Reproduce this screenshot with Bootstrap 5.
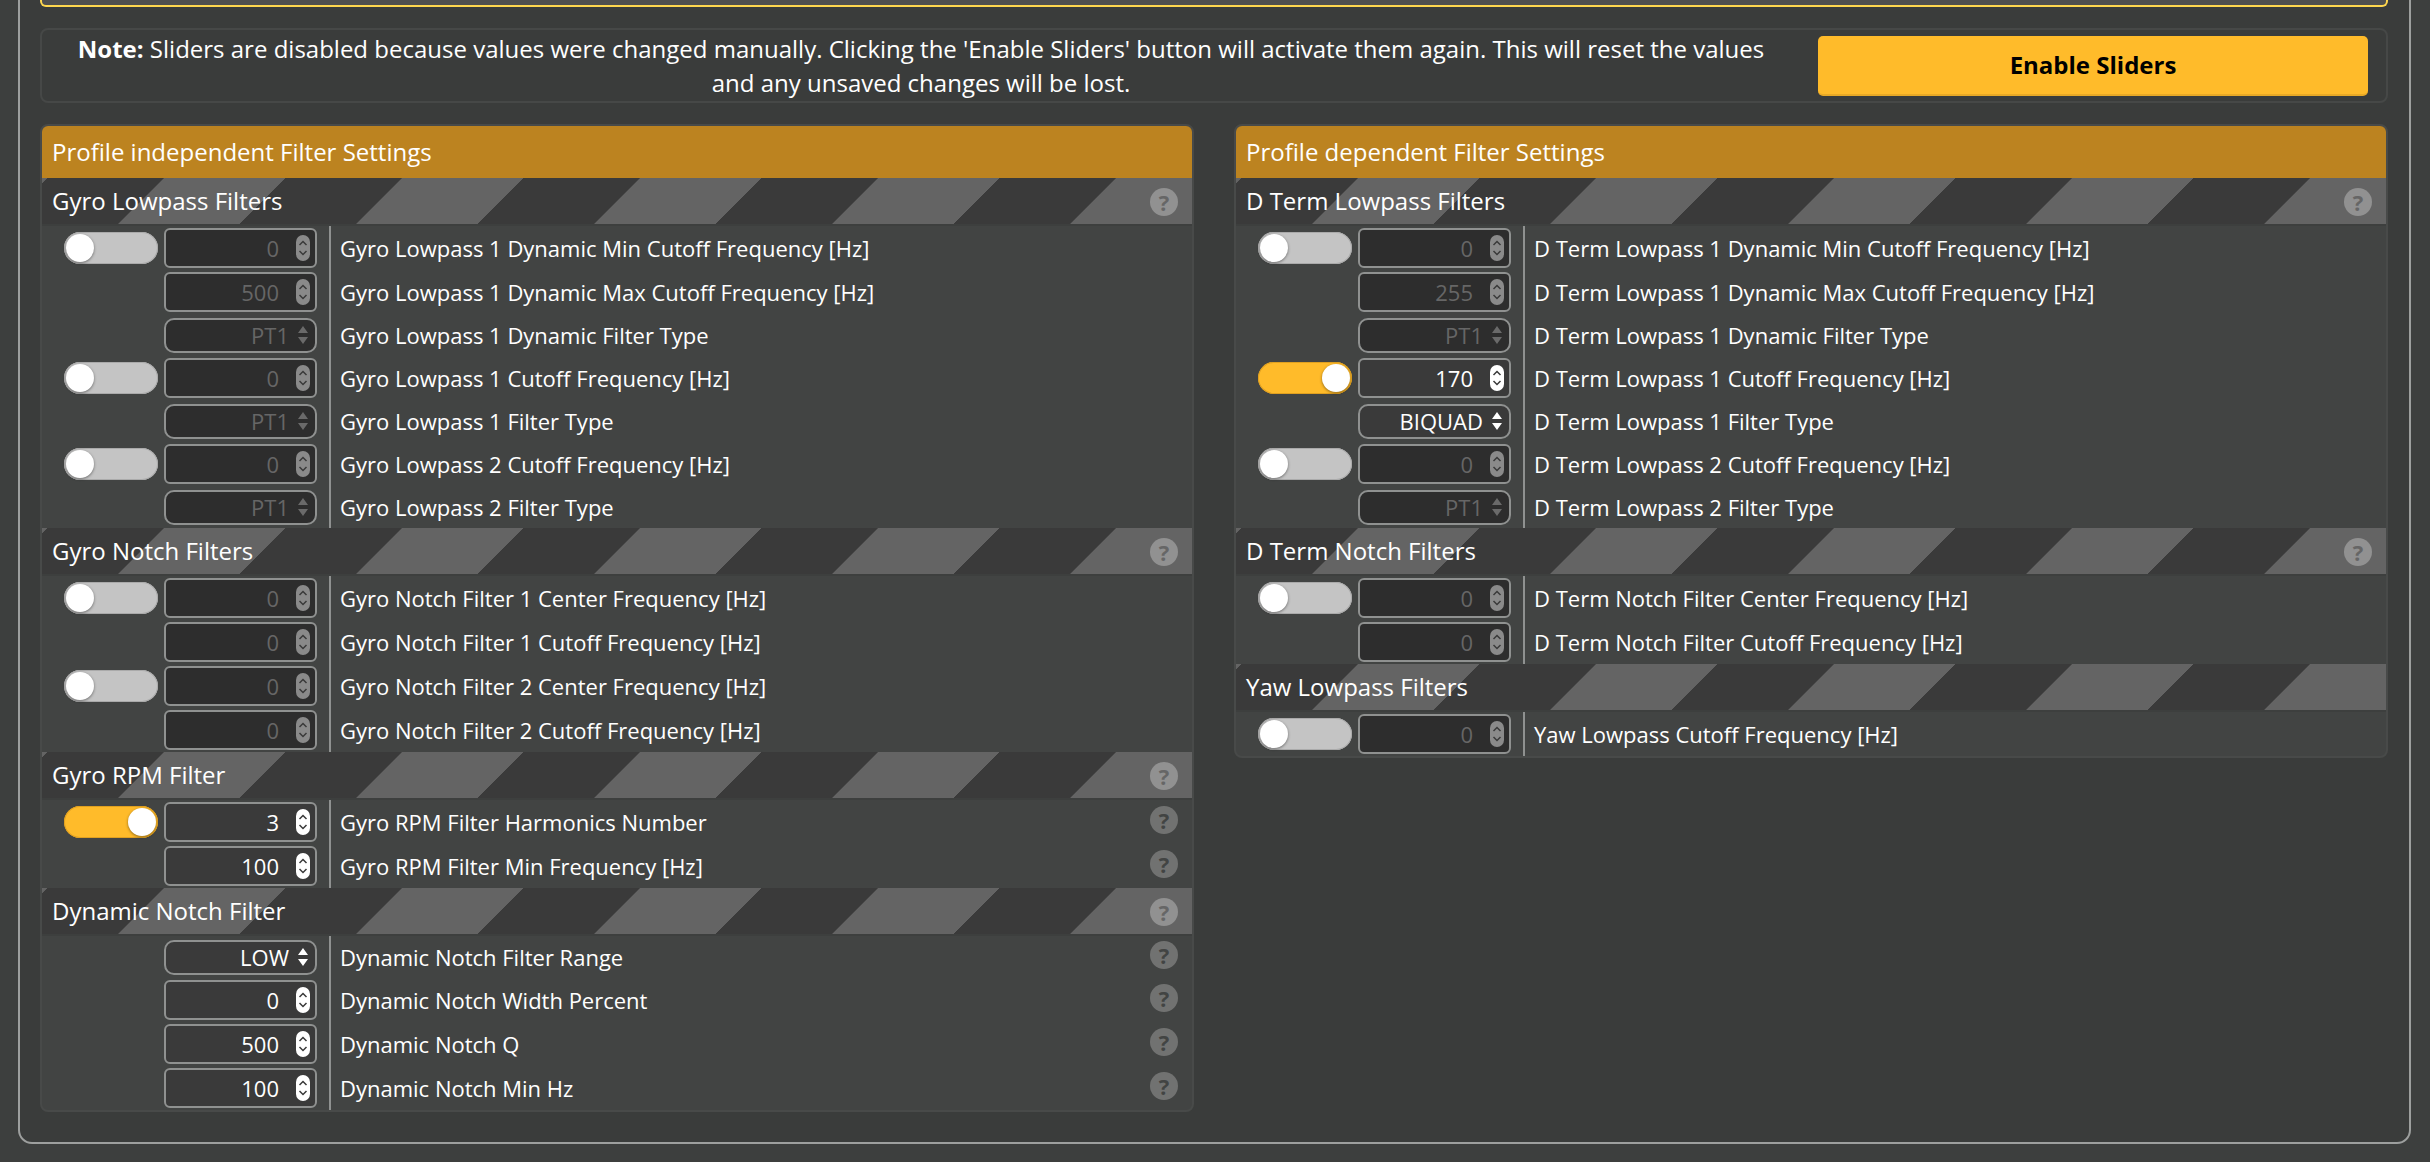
<!DOCTYPE html>
<html lang="en"><head><meta charset="utf-8"><title>Filter Settings</title>
<link href="https://cdn.jsdelivr.net/npm/bootstrap@5.3.0/dist/css/bootstrap.min.css" rel="stylesheet">
<style>
html,body{height:1162px;overflow:hidden;background:#3d3f3e;font-family:"Open Sans",sans-serif;font-size:22px;color:#fff}
.frame{margin:-20px 19px 0 18px;height:1164px;border:2px solid #9d9f9e;border-radius:14px;background:#3a3c3b;padding:0 21px 0 20px}
.warnbox{height:25px;background:#4f4f4f;border:2px solid #ffd74f;border-top:0;border-radius:0 0 6px 6px}
.notebox{margin-top:21px;height:75px;border:2px solid #464847;border-radius:8px;padding:0 18px 0 10px;font-size:24px}
.notetext{line-height:34px;padding:0 38px 0 10px}
.enable{flex:0 0 550px;height:60px;background:#ffbb2a;border:0;border-bottom:2px solid #e8a926;border-radius:5px;color:#000;font-weight:700;font-size:24px}
.cols{margin-top:21px;gap:40px}
.fpanel{flex:1 1 0;border:2px solid #484a49;border-radius:8px;background:#424443;overflow:hidden}
.fpanel:first-child{flex:0 0 1154px}
.ptitle{height:52px;background:#bc8320;padding-left:10px;font-size:24px}
.psub{height:48px;padding:0 14px 0 10px;border-bottom:2px solid #3d3f3e;font-size:24px;background:repeating-linear-gradient(135deg,#646464 0,#646464 3.5px,#3a3a3a 4px,#3a3a3a 86px,#646464 86.6px,#646464 168.3px)}
.frow{height:44px}
.frow.sel{height:42px}
.tslot{flex:0 0 122px;padding-right:6px;justify-content:flex-end}
.tgl{width:94px;height:32px;border-radius:16px;background:#c4c4c4;padding:2px;box-shadow:inset 0 0 0 1px #aaa}
.tgl i{display:block;width:28px;height:28px;border-radius:50%;background:#fff;box-shadow:0 1px 3px rgba(0,0,0,.45)}
.tgl.on{background:#ffbb2a;justify-content:flex-end;box-shadow:inset 0 0 0 1px #e0a020}
.vbox{flex:0 0 153px;height:40px;border:2px solid #8f9190;border-radius:6px;background:#3a3a3a;padding:0 5px 0 0;justify-content:flex-end}
.sel .vbox{height:35px;border-radius:10px}
.vbox.off{background:#2d2d2d;color:#666;border-color:#8f9190}
.vnum{margin-right:17px}
.vsel{margin-right:8px;font-size:22px}
.spin{width:14px;height:26px;flex:none;color:#fff}
.off .spin{color:#8a8a8a}
.arr{width:12px;height:20px;flex:none;margin-right:1px;color:#fff}
.off .arr{color:#6a6a6a}
.flabel{margin-left:12px;flex:1 1 0;height:100%;border-left:2px solid #8f9190;padding:0 14px 0 9px}
.qmark{width:28px;height:28px;border-radius:50%;background:#717271;color:#424443;font-weight:700;font-size:22px;line-height:28px;text-align:center;flex:none}
.flabel .qmark{margin-bottom:4px}
.psub .qmark{background:#919191;color:#666;margin-top:2px}
</style></head>
<body>
<svg width="0" height="0" class="position-absolute"><defs>
<symbol id="sp" viewBox="0 0 14 26"><rect width="14" height="26" rx="7" fill="currentColor"/><path d="M3.5 10 7 6.5 10.5 10M3.5 16 7 19.5 10.5 16" fill="none" stroke="#3a3a3a" stroke-width="1.5"/></symbol>
<symbol id="ar" viewBox="0 0 12 20"><path d="M6 1 11 8H1ZM6 19 1 12H11Z" fill="currentColor"/></symbol>
</defs></svg>
<div class="frame">
<div class="warnbox"></div>
<div class="notebox d-flex align-items-center">
<div class="notetext flex-fill text-center"><strong>Note:</strong> Sliders are disabled because values were changed manually. Clicking the 'Enable Sliders' button will activate them again. This will reset the values and any unsaved changes will be lost.</div>
<button class="btn enable" type="button">Enable Sliders</button>
</div>
<div class="cols d-flex align-items-start">

<div class="fpanel">
<div class="ptitle d-flex align-items-center">Profile independent Filter Settings</div>
<div class="psub d-flex align-items-center justify-content-between">Gyro Lowpass Filters<span class="qmark">?</span></div>
<div class="frow d-flex align-items-center"><div class="tslot d-flex"><span class="tgl d-flex"><i></i></span></div><div class="vbox off d-flex align-items-center"><span class="vnum">0</span><svg class="spin"><use href="#sp"/></svg></div><div class="flabel d-flex align-items-center">Gyro Lowpass 1 Dynamic Min Cutoff Frequency [Hz]</div></div>
<div class="frow d-flex align-items-center"><div class="tslot d-flex"></div><div class="vbox off d-flex align-items-center"><span class="vnum">500</span><svg class="spin"><use href="#sp"/></svg></div><div class="flabel d-flex align-items-center">Gyro Lowpass 1 Dynamic Max Cutoff Frequency [Hz]</div></div>
<div class="frow sel d-flex align-items-center"><div class="tslot d-flex"></div><div class="vbox off d-flex align-items-center"><span class="vsel">PT1</span><svg class="arr"><use href="#ar"/></svg></div><div class="flabel d-flex align-items-center">Gyro Lowpass 1 Dynamic Filter Type</div></div>
<div class="frow d-flex align-items-center"><div class="tslot d-flex"><span class="tgl d-flex"><i></i></span></div><div class="vbox off d-flex align-items-center"><span class="vnum">0</span><svg class="spin"><use href="#sp"/></svg></div><div class="flabel d-flex align-items-center">Gyro Lowpass 1 Cutoff Frequency [Hz]</div></div>
<div class="frow sel d-flex align-items-center"><div class="tslot d-flex"></div><div class="vbox off d-flex align-items-center"><span class="vsel">PT1</span><svg class="arr"><use href="#ar"/></svg></div><div class="flabel d-flex align-items-center">Gyro Lowpass 1 Filter Type</div></div>
<div class="frow d-flex align-items-center"><div class="tslot d-flex"><span class="tgl d-flex"><i></i></span></div><div class="vbox off d-flex align-items-center"><span class="vnum">0</span><svg class="spin"><use href="#sp"/></svg></div><div class="flabel d-flex align-items-center">Gyro Lowpass 2 Cutoff Frequency [Hz]</div></div>
<div class="frow sel d-flex align-items-center"><div class="tslot d-flex"></div><div class="vbox off d-flex align-items-center"><span class="vsel">PT1</span><svg class="arr"><use href="#ar"/></svg></div><div class="flabel d-flex align-items-center">Gyro Lowpass 2 Filter Type</div></div>

<div class="psub d-flex align-items-center justify-content-between">Gyro Notch Filters<span class="qmark">?</span></div>
<div class="frow d-flex align-items-center"><div class="tslot d-flex"><span class="tgl d-flex"><i></i></span></div><div class="vbox off d-flex align-items-center"><span class="vnum">0</span><svg class="spin"><use href="#sp"/></svg></div><div class="flabel d-flex align-items-center">Gyro Notch Filter 1 Center Frequency [Hz]</div></div>
<div class="frow d-flex align-items-center"><div class="tslot d-flex"></div><div class="vbox off d-flex align-items-center"><span class="vnum">0</span><svg class="spin"><use href="#sp"/></svg></div><div class="flabel d-flex align-items-center">Gyro Notch Filter 1 Cutoff Frequency [Hz]</div></div>
<div class="frow d-flex align-items-center"><div class="tslot d-flex"><span class="tgl d-flex"><i></i></span></div><div class="vbox off d-flex align-items-center"><span class="vnum">0</span><svg class="spin"><use href="#sp"/></svg></div><div class="flabel d-flex align-items-center">Gyro Notch Filter 2 Center Frequency [Hz]</div></div>
<div class="frow d-flex align-items-center"><div class="tslot d-flex"></div><div class="vbox off d-flex align-items-center"><span class="vnum">0</span><svg class="spin"><use href="#sp"/></svg></div><div class="flabel d-flex align-items-center">Gyro Notch Filter 2 Cutoff Frequency [Hz]</div></div>

<div class="psub d-flex align-items-center justify-content-between">Gyro RPM Filter<span class="qmark">?</span></div>
<div class="frow d-flex align-items-center"><div class="tslot d-flex"><span class="tgl on d-flex"><i></i></span></div><div class="vbox d-flex align-items-center"><span class="vnum">3</span><svg class="spin"><use href="#sp"/></svg></div><div class="flabel d-flex align-items-center justify-content-between">Gyro RPM Filter Harmonics Number<span class="qmark">?</span></div></div>
<div class="frow d-flex align-items-center"><div class="tslot d-flex"></div><div class="vbox d-flex align-items-center"><span class="vnum">100</span><svg class="spin"><use href="#sp"/></svg></div><div class="flabel d-flex align-items-center justify-content-between">Gyro RPM Filter Min Frequency [Hz]<span class="qmark">?</span></div></div>

<div class="psub d-flex align-items-center justify-content-between">Dynamic Notch Filter<span class="qmark">?</span></div>
<div class="frow sel d-flex align-items-center"><div class="tslot d-flex"></div><div class="vbox d-flex align-items-center"><span class="vsel">LOW</span><svg class="arr"><use href="#ar"/></svg></div><div class="flabel d-flex align-items-center justify-content-between">Dynamic Notch Filter Range<span class="qmark">?</span></div></div>
<div class="frow d-flex align-items-center"><div class="tslot d-flex"></div><div class="vbox d-flex align-items-center"><span class="vnum">0</span><svg class="spin"><use href="#sp"/></svg></div><div class="flabel d-flex align-items-center justify-content-between">Dynamic Notch Width Percent<span class="qmark">?</span></div></div>
<div class="frow d-flex align-items-center"><div class="tslot d-flex"></div><div class="vbox d-flex align-items-center"><span class="vnum">500</span><svg class="spin"><use href="#sp"/></svg></div><div class="flabel d-flex align-items-center justify-content-between">Dynamic Notch Q<span class="qmark">?</span></div></div>
<div class="frow d-flex align-items-center"><div class="tslot d-flex"></div><div class="vbox d-flex align-items-center"><span class="vnum">100</span><svg class="spin"><use href="#sp"/></svg></div><div class="flabel d-flex align-items-center justify-content-between">Dynamic Notch Min Hz<span class="qmark">?</span></div></div>
</div>

<div class="fpanel">
<div class="ptitle d-flex align-items-center">Profile dependent Filter Settings</div>
<div class="psub d-flex align-items-center justify-content-between">D Term Lowpass Filters<span class="qmark">?</span></div>
<div class="frow d-flex align-items-center"><div class="tslot d-flex"><span class="tgl d-flex"><i></i></span></div><div class="vbox off d-flex align-items-center"><span class="vnum">0</span><svg class="spin"><use href="#sp"/></svg></div><div class="flabel d-flex align-items-center">D Term Lowpass 1 Dynamic Min Cutoff Frequency [Hz]</div></div>
<div class="frow d-flex align-items-center"><div class="tslot d-flex"></div><div class="vbox off d-flex align-items-center"><span class="vnum">255</span><svg class="spin"><use href="#sp"/></svg></div><div class="flabel d-flex align-items-center">D Term Lowpass 1 Dynamic Max Cutoff Frequency [Hz]</div></div>
<div class="frow sel d-flex align-items-center"><div class="tslot d-flex"></div><div class="vbox off d-flex align-items-center"><span class="vsel">PT1</span><svg class="arr"><use href="#ar"/></svg></div><div class="flabel d-flex align-items-center">D Term Lowpass 1 Dynamic Filter Type</div></div>
<div class="frow d-flex align-items-center"><div class="tslot d-flex"><span class="tgl on d-flex"><i></i></span></div><div class="vbox d-flex align-items-center"><span class="vnum">170</span><svg class="spin"><use href="#sp"/></svg></div><div class="flabel d-flex align-items-center">D Term Lowpass 1 Cutoff Frequency [Hz]</div></div>
<div class="frow sel d-flex align-items-center"><div class="tslot d-flex"></div><div class="vbox d-flex align-items-center"><span class="vsel">BIQUAD</span><svg class="arr"><use href="#ar"/></svg></div><div class="flabel d-flex align-items-center">D Term Lowpass 1 Filter Type</div></div>
<div class="frow d-flex align-items-center"><div class="tslot d-flex"><span class="tgl d-flex"><i></i></span></div><div class="vbox off d-flex align-items-center"><span class="vnum">0</span><svg class="spin"><use href="#sp"/></svg></div><div class="flabel d-flex align-items-center">D Term Lowpass 2 Cutoff Frequency [Hz]</div></div>
<div class="frow sel d-flex align-items-center"><div class="tslot d-flex"></div><div class="vbox off d-flex align-items-center"><span class="vsel">PT1</span><svg class="arr"><use href="#ar"/></svg></div><div class="flabel d-flex align-items-center">D Term Lowpass 2 Filter Type</div></div>

<div class="psub d-flex align-items-center justify-content-between">D Term Notch Filters<span class="qmark">?</span></div>
<div class="frow d-flex align-items-center"><div class="tslot d-flex"><span class="tgl d-flex"><i></i></span></div><div class="vbox off d-flex align-items-center"><span class="vnum">0</span><svg class="spin"><use href="#sp"/></svg></div><div class="flabel d-flex align-items-center">D Term Notch Filter Center Frequency [Hz]</div></div>
<div class="frow d-flex align-items-center"><div class="tslot d-flex"></div><div class="vbox off d-flex align-items-center"><span class="vnum">0</span><svg class="spin"><use href="#sp"/></svg></div><div class="flabel d-flex align-items-center">D Term Notch Filter Cutoff Frequency [Hz]</div></div>

<div class="psub d-flex align-items-center justify-content-between">Yaw Lowpass Filters</div>
<div class="frow d-flex align-items-center"><div class="tslot d-flex"><span class="tgl d-flex"><i></i></span></div><div class="vbox off d-flex align-items-center"><span class="vnum">0</span><svg class="spin"><use href="#sp"/></svg></div><div class="flabel d-flex align-items-center">Yaw Lowpass Cutoff Frequency [Hz]</div></div>
</div>

</div>
</div>
<script src="https://cdn.jsdelivr.net/npm/bootstrap@5.3.0/dist/js/bootstrap.bundle.min.js"></script>
</body></html>
